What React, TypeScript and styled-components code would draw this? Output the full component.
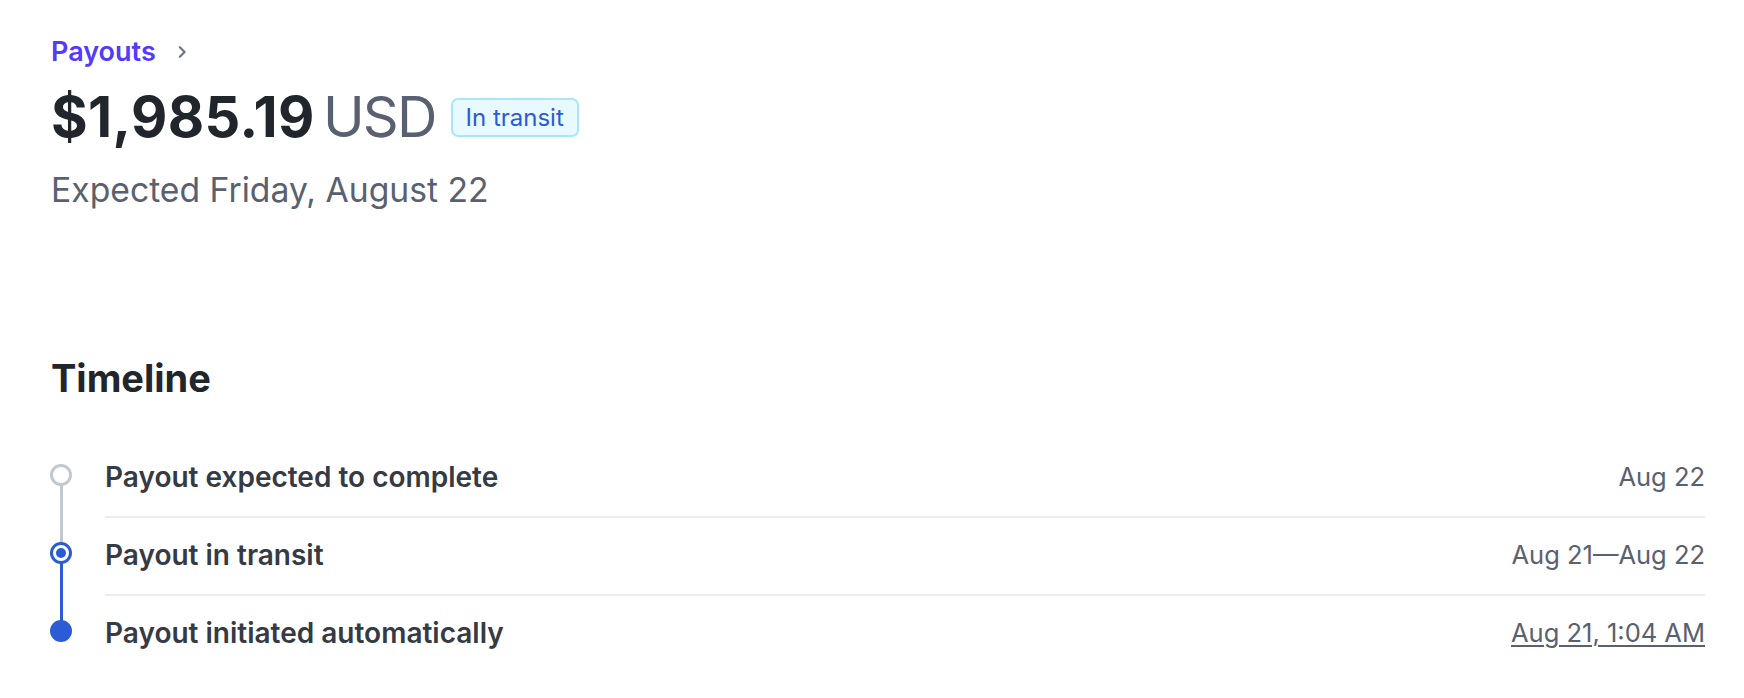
import React from "react";
import styled, { createGlobalStyle } from "styled-components";

const GlobalStyle = createGlobalStyle`
  html, body {
    margin: 0;
    padding: 0;
    background: #ffffff;
  }
  body {
    font-family: Inter, "Noto Sans", "Liberation Sans", sans-serif;
    -webkit-font-smoothing: antialiased;
  }
`;

const Page = styled.main`
  padding: 37px 39px 0 51px;
`;

const Breadcrumb = styled.nav`
  display: flex;
  align-items: center;
  gap: 19px;
  height: 30px;
`;

const CrumbLink = styled.a`
  font-size: 27px;
  line-height: 30px;
  font-weight: 600;
  color: #533afd;
  text-decoration: none;
`;

const Chevron = styled.svg`
  width: 14px;
  height: 14px;
  color: #687385;
`;

const AmountRow = styled.div`
  display: flex;
  align-items: center;
  margin-top: 18px;
  height: 64px;
`;

const Amount = styled.span`
  font-size: 56px;
  line-height: 64px;
  font-weight: 700;
  color: #21252c;
  letter-spacing: 0.4px;
`;

const Currency = styled.span`
  font-size: 56px;
  line-height: 64px;
  font-weight: 400;
  color: #596171;
  margin-left: 8px;
  letter-spacing: -1.8px;
`;

const Badge = styled.span`
  display: inline-flex;
  align-items: center;
  box-sizing: border-box;
  height: 39px;
  padding: 0 13px;
  margin-left: 15px;
  border: 2px solid #a7e7fc;
  border-radius: 7px;
  background: #e8f9ff;
  color: #2b5bd4;
  font-size: 24px;
  font-weight: 400;
`;

const Expected = styled.p`
  margin: 21px 0 0;
  font-size: 33.7px;
  line-height: 40px;
  color: #596171;
`;

const SectionTitle = styled.h2`
  margin: 146px 0 0;
  font-size: 38px;
  line-height: 44px;
  font-weight: 700;
  color: #21252c;
`;

const TimelineList = styled.ol`
  list-style: none;
  margin: 40px 0 0 -1px;
  padding: 0;
`;

const Item = styled.li`
  display: grid;
  grid-template-columns: 22px 1fr;
  column-gap: 33px;
`;

type State = "upcoming" | "current" | "done";

const Marker = styled.div<{ $state: State; $last: boolean }>`
  position: relative;
  padding-top: 24px;
  &::after {
    content: "";
    display: ${(p) => (p.$last ? "none" : "block")};
    position: absolute;
    left: 9.5px;
    top: 35px;
    width: 3px;
    height: 78px;
    background: ${(p) => (p.$state === "upcoming" ? "#c0c8d2" : "#2b5cd6")};
    z-index: 0;
  }
`;

const Dot = styled.span<{ $state: State }>`
  position: relative;
  z-index: 1;
  display: flex;
  align-items: center;
  justify-content: center;
  box-sizing: border-box;
  width: 22px;
  height: 22px;
  border-radius: 50%;
  border: 3px solid ${(p) => (p.$state === "upcoming" ? "#c0c8d2" : "#2b5cd6")};
  background: ${(p) => (p.$state === "done" ? "#2b5cd6" : "#ffffff")};
  &::before {
    content: "";
    display: ${(p) => (p.$state === "current" ? "block" : "none")};
    width: 10px;
    height: 10px;
    border-radius: 50%;
    background: #2b5cd6;
  }
`;

const Body = styled.div<{ $last: boolean }>`
  display: flex;
  align-items: center;
  justify-content: space-between;
  padding: 22px 0 24px;
  border-bottom: ${(p) => (p.$last ? "none" : "2px solid #ebeef1")};
`;

const Label = styled.span`
  font-size: 28px;
  line-height: 30px;
  font-weight: 600;
  color: #353a44;
`;

const DateText = styled.span<{ $link?: boolean }>`
  font-size: 25.5px;
  line-height: 30px;
  color: #596171;
  text-decoration: ${(p) => (p.$link ? "underline" : "none")};
  text-underline-offset: 3px;
  text-decoration-thickness: 1.5px;
`;

const events: { label: string; date: string; state: State; link?: boolean }[] = [
  { label: "Payout expected to complete", date: "Aug 22", state: "upcoming" },
  { label: "Payout in transit", date: "Aug 21\u2014Aug 22", state: "current" },
  { label: "Payout initiated automatically", date: "Aug 21, 1:04 AM", state: "done", link: true },
];

export default function App() {
  return (
    <>
      <GlobalStyle />
      <Page>
        <Breadcrumb>
          <CrumbLink href="#">Payouts</CrumbLink>
          <Chevron viewBox="0 0 16 16" fill="none">
            <path d="M5.5 2.5 11 8l-5.5 5.5" stroke="currentColor" strokeWidth="2.4" strokeLinecap="round" strokeLinejoin="round" />
          </Chevron>
        </Breadcrumb>
        <AmountRow>
          <Amount>$1,985.19</Amount>
          <Currency>USD</Currency>
          <Badge>In transit</Badge>
        </AmountRow>
        <Expected>Expected Friday, August 22</Expected>
        <SectionTitle>Timeline</SectionTitle>
        <TimelineList>
          {events.map((e, i) => {
            const last = i === events.length - 1;
            return (
              <Item key={e.label}>
                <Marker $state={e.state} $last={last}>
                  <Dot $state={e.state} />
                </Marker>
                <Body $last={last}>
                  <Label>{e.label}</Label>
                  <DateText $link={e.link}>{e.date}</DateText>
                </Body>
              </Item>
            );
          })}
        </TimelineList>
      </Page>
    </>
  );
}
